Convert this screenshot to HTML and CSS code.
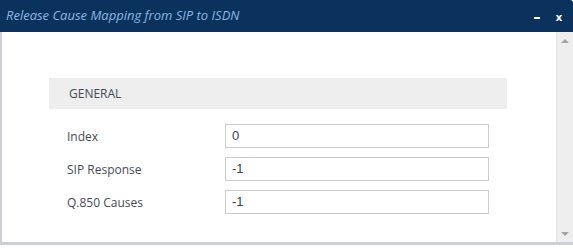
FILE: index.html
```html
<!DOCTYPE html>
<html>
<head>
<meta charset="utf-8">
<link rel="stylesheet" href="styles.css">
</head>
<body>
<div class="dialog">
  <div class="titlebar">
    <span class="title">Release Cause Mapping from SIP to ISDN</span>
    <span class="controls"><span class="min"></span><span class="close">x</span></span>
  </div>
  <div class="body">
    <div class="content">
      <div class="section">GENERAL</div>
      <div class="rows">
        <div class="row"><span class="label">Index</span><div class="input">0</div></div>
        <div class="row"><span class="label">SIP Response</span><div class="input">-1</div></div>
        <div class="row"><span class="label">Q.850 Causes</span><div class="input">-1</div></div>
      </div>
    </div>
    <div class="scrollbar">
      <span class="arrow up"></span>
      <span class="arrow down"></span>
    </div>
  </div>
  <div class="footer"></div>
</div>
</body>
</html>
```
FILE: styles.css
```css
html, body { margin: 0; padding: 0; background: #fff; }
body { font-family: "Open Sans", "Liberation Sans", sans-serif; width: 573px; height: 248px; overflow: hidden; }
.dialog { display: flex; flex-direction: column; width: 573px; }
.titlebar { height: 32px; background: #0b325c; display: flex; align-items: center; justify-content: space-between; padding: 0 0 0 6px; border-top-right-radius: 3px; }
.title { color: #8db6e4; font-style: italic; font-size: 13px; margin-top: -2px; }
.controls { display: flex; align-items: center; height: 100%; }
.min { width: 6px; height: 2px; background: #fff; margin-top: 3px; margin-right: 16px; }
.close { color: #fff; font-weight: bold; font-size: 11px; margin-right: 11px; margin-top: 0; line-height: 1; }
.body { display: flex; height: 210px; border-left: 2px solid #ccd0d6; }
.content { flex: 1; padding: 46px 0 0 47px; }
.section { width: 438px; height: 31px; background: #eeeeee; color: #444a55; font-size: 12px; padding-left: 20px; line-height: 31px; box-sizing: content-box; }
.rows { display: flex; flex-direction: column; gap: 9px; padding-top: 15px; }
.row { display: flex; align-items: center; height: 24px; }
.label { width: 158px; padding-left: 18px; color: #444a55; font-size: 12px; }
.input { width: 256px; height: 22px; border: 1px solid #c9ccd3; color: #3a3f48; font-size: 13px; line-height: 22px; padding-left: 6px; font-family: "Liberation Sans", sans-serif; }
.scrollbar { width: 16px; background: #eeeeee; border-left: 1px solid #e2e2e2; display: flex; flex-direction: column; justify-content: space-between; align-items: center; padding: 7px 0 6px; }
.arrow { width: 0; height: 0; border-left: 4px solid transparent; border-right: 4px solid transparent; }
.arrow.up { border-bottom: 4px solid #a3a3a3; }
.arrow.down { border-top: 4px solid #a3a3a3; }
.footer { height: 3px; background: #ccd0d6; }
```
